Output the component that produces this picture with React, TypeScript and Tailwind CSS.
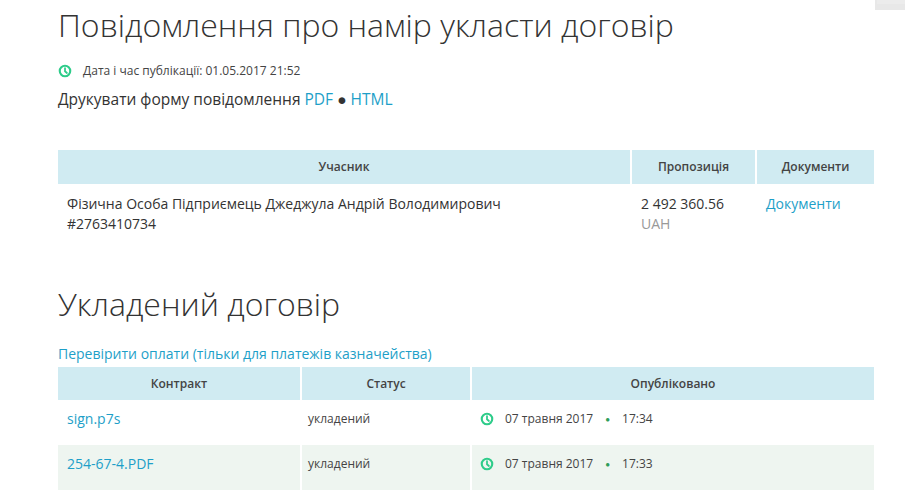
import React from "react";

const Clock = () => (
  <svg width="14" height="14" viewBox="0 0 16 16" className="shrink-0">
    <circle cx="8" cy="8" r="6" fill="none" stroke="#2ecc8a" strokeWidth="2.4" />
    <path d="M8 4.6V8.3L10.2 10.3" fill="none" stroke="#2ecc8a" strokeWidth="2" strokeLinecap="round" />
  </svg>
);

export default function App() {
  return (
    <div className="w-[907px] h-[501px] overflow-hidden bg-white relative text-[#333]" style={{ fontFamily: '"Open Sans", sans-serif' }}>
      <div className="absolute right-[2px] top-0 w-[30px] h-[10px] bg-[#ececec] border-l-2 border-b-[6px] border-[#e8e8e8]" />
      <div className="pl-[58px] pr-[33px]">
        <h1 className="text-[32px] font-light leading-[48px] pt-[1px] text-[#333]">Повідомлення про намір укласти договір</h1>
        <div className="flex items-center gap-[11px] mt-[13px] text-[12px] text-[#444]"><Clock />Дата і час публікації: 01.05.2017 21:52</div>
        <div className="text-[15.5px] mt-[8px] text-[#333]">Друкувати форму повідомлення <span className="text-[#1e9fc8]">PDF</span> ● <span className="text-[#1e9fc8]">HTML</span></div>
        <div className="mt-[39px]">
          <div className="grid grid-cols-[574px_125px_117px] h-[34px] text-[12px] font-semibold text-[#444]">
            <div className="bg-[#d0ebf2] flex items-center justify-center mr-[2px]">Учасник</div>
            <div className="bg-[#d0ebf2] flex items-center justify-center mr-[2px]">Пропозиція</div>
            <div className="bg-[#d0ebf2] flex items-center justify-center">Документи</div>
          </div>
          <div className="grid grid-cols-[574px_125px_117px] text-[14px] leading-[20px] pt-[10px]">
            <div className="px-[9px]">Фізична Особа Підприємець Джеджула Андрій Володимирович<br />#2763410734</div>
            <div className="px-[9px]">2 492 360.56<br /><span className="text-[#999]">UAH</span></div>
            <div className="px-[9px] text-[#1e9fc8]">Документи</div>
          </div>
        </div>
        <h2 className="text-[32px] font-light leading-[44px] mt-[48px] text-[#333]">Укладений договір</h2>
        <div className="text-[14px] text-[#1e9fc8] mt-[18px] leading-[20px]">Перевірити оплати (тільки для платежів казначейства)</div>
        <div className="mt-[3px]">
          <div className="grid grid-cols-[244px_170px_402px] h-[33px] text-[12px] font-semibold text-[#444]">
            <div className="bg-[#d0ebf2] flex items-center justify-center mr-[2px]">Контракт</div>
            <div className="bg-[#d0ebf2] flex items-center justify-center mr-[2px]">Статус</div>
            <div className="bg-[#d0ebf2] flex items-center justify-center">Опубліковано</div>
          </div>
          {[["sign.p7s", "17:34", ""], ["254-67-4.PDF", "17:33", "bg-[#eef5f0]"]].map(([n, t, bg]) => (
            <div key={n} className={`grid grid-cols-[244px_170px_402px] h-[45px] ${bg}`}>
              <div className="px-[9px] pt-[8px] text-[14px] text-[#1e9fc8] border-r-2 border-white">{n}</div>
              <div className="px-[6px] pt-[10px] text-[12px] text-[#444] border-r-2 border-white">укладений</div>
              <div className="pl-[8px] pt-[10px] text-[12px] text-[#444] flex items-start gap-[11px]">
                <span className="mt-[2px]"><Clock /></span>
                <span>07 травня 2017</span>
                <span className="text-[#2e9e5a] text-[8px] leading-[18px] mx-[1px]">●</span>
                <span>{t}</span>
              </div>
            </div>
          ))}
        </div>
      </div>
    </div>
  );
}
